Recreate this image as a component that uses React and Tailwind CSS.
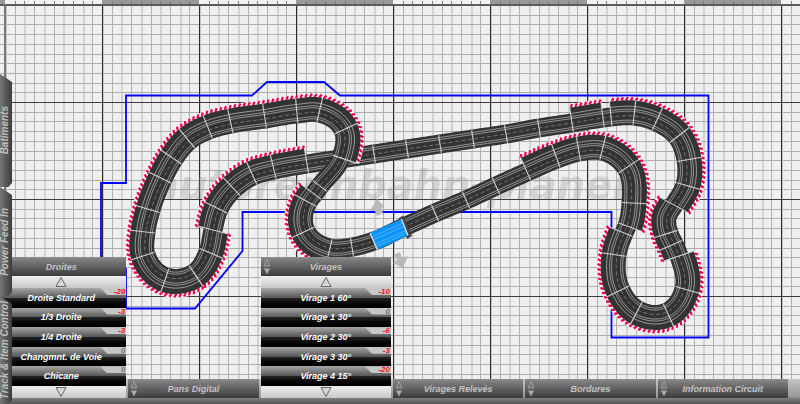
import { clsx } from "clsx";

// Each node: x, y, border side of the piece that follows (-1 left, 1 right), 1 = no joint drawn
const lowerRun = [
  [374, 241, 0],
  [404, 227, 0],
  [435, 213, 0],
  [466, 200, 0],
  [496, 186, 0],
  [527, 172, -1],
  [557, 159, -1],
  [579, 152, -1],
  [602, 151, -1],
  [626, 168, -1],
  [631, 203, -1],
  [627, 226, 0],
  [624, 233, 1],
  [617, 255, 1],
  [621, 290, 1],
  [638, 310, 1],
  [667, 312, 1],
  [684, 289, 1],
  [679, 256, -1],
  [674, 244, -1],
  [669, 233, -1],
  [667, 218, -1, 1],
  [674, 205, 1],
  [685, 185, 1],
  [686, 160, 1],
  [677, 137, 1],
  [656, 122, 1],
  [634, 116, 1],
  [611, 117, 0],
  [603, 118, 1],
  [572, 123, 0],
  [539, 128, 0],
  [506, 134, 0],
  [473, 139, 0],
  [440, 144, 0],
  [407, 149, 0],
  [374, 154, 0],
  [340, 159, 0],
  [307, 164, 1],
  [274, 170, 1],
  [253, 176, 1],
  [234, 189, 1],
  [219, 209, 1],
  [213, 230, -1],
  [208, 252, -1],
  [194, 273, -1],
  [166, 277, -1],
  [146, 255, 0],
];

const upperRun = [
  [194, 273, -1],
  [166, 277, -1],
  [146, 255, -1],
  [146, 232, -1],
  [151, 210, -1],
  [163, 179, -1],
  [174, 159, -1],
  [189, 141, -1],
  [209, 130, -1],
  [231, 124, -1],
  [265, 119, -1],
  [297, 114, -1],
  [319, 113, -1],
  [343, 130, -1],
  [341, 158, 0],
  [320, 186, 0],
  [314, 194, 1],
  [308, 202, 1],
  [306, 231, 1],
  [330, 248, 0],
  [352, 247, 0],
  [374, 241, 0],
];

// the ends of a run take their tangent from these neighbours
const lowerEnds = [[352, 247], [146, 232]];
const upperEnds = [[208, 252], [404, 227]];

const HALF = 9;
const BORDER = 7;
const STEPS = 12;

// direction at b of the circle through a, b and c
function tangentAt(a, b, c) {
  const v1 = [b[0] - a[0], b[1] - a[1]];
  const v2 = [c[0] - b[0], c[1] - b[1]];
  const l1 = Math.hypot(...v1);
  const l2 = Math.hypot(...v2);
  const t = [0, 1].map((k) => (v1[k] / l1) * l2 + (v2[k] / l2) * l1);
  const len = Math.hypot(...t);
  return [t[0] / len, t[1] / len];
}

function sampleSpan(p0, p1, p2, p3) {
  const t1 = tangentAt(p0, p1, p2);
  const t2 = tangentAt(p1, p2, p3);
  const chord = Math.hypot(p2[0] - p1[0], p2[1] - p1[1]);
  const turn = Math.acos(Math.min(1, t1[0] * t2[0] + t1[1] * t2[1]));
  const m = chord / Math.cos(turn / 4) ** 2;
  const out = [];
  for (let i = 0; i <= STEPS; i++) {
    const t = i / STEPS;
    const [x, y] = [0, 1].map(
      (k) =>
        (2 * t ** 3 - 3 * t ** 2 + 1) * p1[k] +
        (t ** 3 - 2 * t ** 2 + t) * m * t1[k] +
        (3 * t ** 2 - 2 * t ** 3) * p2[k] +
        (t ** 3 - t ** 2) * m * t2[k]
    );
    const [dx, dy] = [0, 1].map(
      (k) =>
        (6 * t ** 2 - 6 * t) * p1[k] +
        (3 * t ** 2 - 4 * t + 1) * m * t1[k] +
        (6 * t - 6 * t ** 2) * p2[k] +
        (3 * t ** 2 - 2 * t) * m * t2[k]
    );
    const len = Math.hypot(dx, dy);
    out.push({ x, y, nx: -dy / len, ny: dx / len });
  }
  return out;
}

function offsetPoint(s, offset) {
  return [s.x + s.nx * offset, s.y + s.ny * offset];
}

function offsetPath(samples, offset) {
  return samples
    .map((s, i) => {
      const [x, y] = offsetPoint(s, offset);
      return `${i ? "L" : "M"}${x.toFixed(2)} ${y.toFixed(2)}`;
    })
    .join("");
}

// slanted red ticks of a kerb, evenly spaced along its middle
function kerbPath(samples, side) {
  let d = "";
  let left = 1;
  for (let i = 1; i < samples.length; i++) {
    const a = offsetPoint(samples[i - 1], side * 17);
    const b = offsetPoint(samples[i], side * 17);
    const len = Math.hypot(b[0] - a[0], b[1] - a[1]);
    if (!len) continue;
    const ux = (b[0] - a[0]) / len;
    const uy = (b[1] - a[1]) / len;
    while (left <= len) {
      const x = a[0] + ux * left;
      const y = a[1] + uy * left;
      const ox = samples[i].nx * side * 1.6 - ux * side;
      const oy = samples[i].ny * side * 1.6 - uy * side;
      d += `M${(x - ox).toFixed(2)} ${(y - oy).toFixed(2)}L${(x + ox).toFixed(2)} ${(y + oy).toFixed(2)}`;
      left += 4.8;
    }
    left -= len;
  }
  return d;
}

function buildRun(nodes, ends) {
  const all = [ends[0], ...nodes, ends[1]];
  const spans = nodes.slice(0, -1).map((node, i) => ({
    side: node[2],
    samples: sampleSpan(all[i], all[i + 1], all[i + 2], all[i + 3]),
  }));
  const borders = [];
  spans.forEach((span, i) => {
    if (!span.side) return;
    if (i && spans[i - 1].side === span.side) {
      borders[borders.length - 1].samples.push(...span.samples.slice(1));
    } else {
      borders.push({ side: span.side, samples: [...span.samples] });
    }
  });
  const joints = spans
    .map((span, i) => {
      const sides = [span.side, i ? spans[i - 1].side : span.side];
      return {
        s: span.samples[0],
        from: sides.includes(-1) ? -HALF - BORDER : -HALF,
        to: sides.includes(1) ? HALF + BORDER : HALF,
        hidden: nodes[i][3],
      };
    })
    .filter((j) => !j.hidden);
  return { centre: spans.flatMap((s) => s.samples), borders, joints };
}

const runs = [buildRun(lowerRun, lowerEnds), buildRun(upperRun, upperEnds)];

function TrackRun({ run }) {
  return (
    <g fill="none">
      {run.borders.map((b, i) => (
        <g key={i}>
          <path d={offsetPath(b.samples, b.side * 17)} stroke="#ffffff" strokeWidth="4" />
          <path d={kerbPath(b.samples, b.side)} stroke="#f5004f" strokeWidth="2.4" />
          <path d={offsetPath(b.samples, b.side * 12)} stroke="#333333" strokeWidth="7" />
        </g>
      ))}
      <path d={offsetPath(run.centre, 0)} stroke="#333333" strokeWidth="19" />
      {[-6.5, -4.5, 4.5, 6.5].map((o) => (
        <path key={o} d={offsetPath(run.centre, o)} stroke="#a0a0a0" strokeWidth="0.9" />
      ))}
      <path d={offsetPath(run.centre, 0)} stroke="#858585" strokeWidth="0.8" strokeDasharray="4 2.5" />
      {run.borders.map((b, i) => (
        <path key={i} d={offsetPath(b.samples, b.side * 9.5)} stroke="#b8b8b8" strokeWidth="0.8" />
      ))}
      {run.joints.map(({ s, from, to }, i) => (
        <path
          key={i}
          d={`M${offsetPoint(s, from).join(" ")}L${offsetPoint(s, to).join(" ")}`}
          stroke="#d0d0d0"
          strokeWidth="1.1"
        />
      ))}
    </g>
  );
}

const gridLines = [1, 2, 3, 4, 5, 6, 7, 8, 9];

function TrackCanvas() {
  return (
    <svg className="absolute inset-0 h-full w-full" role="img" aria-label="Circuit">
      <defs>
        <pattern id="grid" x="5" y="5" width="97" height="97" patternUnits="userSpaceOnUse">
          <rect width="97" height="97" fill="#efefef" />
          {gridLines.map((n) => (
            <rect
              key={n}
              x={Math.round(n * 9.7)}
              width={n % 2 ? 1 : 2}
              height="97"
              fill={n % 2 ? "#b0b0b0" : "#d2d2d2"}
            />
          ))}
          {gridLines.map((n) => (
            <rect key={n} y={Math.round(n * 9.7)} width="97" height="1" fill="#adadad" />
          ))}
          <rect width="1" height="97" fill="#2c2c2c" />
          <rect x="1" width="1" height="97" fill="#c4c4c4" />
          <rect width="97" height="1" fill="#3c3c3c" />
        </pattern>
        <pattern id="ruler" x="102" y="0" width="194" height="5" patternUnits="userSpaceOnUse">
          <rect width="194" height="5" fill="#f2f2f2" />
          <rect width="97" height="5" fill="#999999" />
          {[...gridLines, 11, 12, 13, 14, 15, 16, 17, 18, 19].map((n) => (
            <rect key={n} x={Math.round(n * 9.7)} y="1" width="1" height="3" fill="#808080" />
          ))}
        </pattern>
      </defs>
      <rect width="100%" height="100%" fill="url(#grid)" />
      <rect width="100%" height="5" fill="url(#ruler)" />
      <rect y="4" width="100%" height="2" fill="#5c5c5c" />
      <rect x="4" y="4" width="2" height="100%" fill="#777777" />

      <text
        x="152"
        y="199"
        fill="#8c8c8c"
        fillOpacity="0.3"
        className="font-['DejaVu_Sans'] text-[40px] font-bold italic"
      >
        autorennbahn-planer
      </text>

      <path
        d="M101 269V183H126V95.5H252L267 82H324L340 95.5H708.5V337.5H611.5V212H242.5V251L195 308.500H126V269Z"
        fill="none"
        stroke="#0000fa"
        strokeWidth="1.8"
      />

      {runs.map((run, i) => (
        <TrackRun key={i} run={run} />
      ))}

      {/* start piece with its direction arrows */}
      <path d="M399 218L403 215.500L412 236L407 239Z" fill="#444444" />
      <path d="M370 233L401.500 219L408 235.500L377.500 250Z" fill="#0c94ff" />
      <path
        d="M371.500 237L403 223M373 240L404.500 226M375.500 244L406 230.500M376.500 246.500L407 233"
        stroke="#58b4f5"
        strokeWidth="0.9"
      />
      <path d="M370 233L377.500 250M401.500 219L408 235.500" stroke="#e5e5e5" strokeWidth="1.2" />
      <path d="M377 199L385 207L381 208L383 213L377 216L375 211L370 211Z" fill="#b8b8b8" />
      <path d="M394 255L400 252L402 258L408 256L403 268L393 263L397 260Z" fill="#b8b8b8" />
    </svg>
  );
}

const sideTabs = [
  { name: "Batiments", height: "h-[113px]" },
  { name: "Power Feed In", height: "h-[109px]" },
  { name: "Track & Item Control", height: "h-[108px]" },
];

const menus = [
  {
    name: "Droites",
    items: [
      { name: "Droite Standard", stock: -20 },
      { name: "1/3 Droite", stock: -3 },
      { name: "1/4 Droite", stock: -3 },
      { name: "Changmnt. de Voie", stock: 0 },
      { name: "Chicane", stock: 0 },
    ],
  },
  { name: "Pans Digital" },
  {
    name: "Virages",
    items: [
      { name: "Virage 1 60°", stock: -10 },
      { name: "Virage 1 30°", stock: 0 },
      { name: "Virage 2 30°", stock: -6 },
      { name: "Virage 3 30°", stock: -3 },
      { name: "Virage 4 15°", stock: -20 },
    ],
  },
  { name: "Virages Relevés" },
  { name: "Bordures" },
  { name: "Information Circuit" },
];

function ScrollButton({ label, up }) {
  return (
    <button
      type="button"
      aria-label={label}
      className="flex h-3 w-full items-center justify-center bg-linear-to-b from-[#efefef] to-[#c8c8c8]"
    >
      <svg width="12" height="10" viewBox="0 0 12 10" fill="#d8d8d8" stroke="#666666">
        <path d={up ? "M6 0.500L11 9.500H1Z" : "M6 9.500L11 0.500H1Z"} />
      </svg>
    </button>
  );
}

function MenuItem({ item }) {
  return (
    <button
      type="button"
      className="relative flex flex-1 items-center justify-center bg-linear-to-b from-[#a8a8a8] to-[#101010]"
    >
      <span className="absolute inset-x-0 bottom-0 h-1/2 bg-linear-to-b from-[#252525] to-black" />
      <span className="absolute top-0 right-0 h-[7px] w-[26px] bg-[#c6c6c6] [clip-path:polygon(0_0,100%_0,100%_100%,7px_100%)]" />
      <span
        className={clsx(
          "absolute top-0 right-px text-[8px] leading-2 font-bold italic",
          item.stock < 0 ? "text-[#f51010]" : "text-[#707070]"
        )}
      >
        {item.stock}
      </span>
      <span className="relative text-[9px] leading-3 font-bold text-white italic">{item.name}</span>
    </button>
  );
}

function Menu({ menu }) {
  return (
    <section className="min-w-0 flex-1">
      <button
        type="button"
        aria-expanded={Boolean(menu.items)}
        className="relative flex h-[19px] w-full items-center justify-center border-t border-[#8c8c8c] bg-linear-to-b from-[#858585] to-[#3c3c3c]"
      >
        <svg className="absolute top-px left-[2px]" width="8" height="16" viewBox="0 0 8 16">
          <path d="M4 0.500L7 7H1Z" fill="#777777" stroke="#a8a8a8" strokeWidth="0.8" />
          <path d="M4 15.500L7 9.500H1Z" fill="#aaaaaa" />
        </svg>
        <span className="text-[9px] leading-3 font-bold text-[#c4c4c4] italic">{menu.name}</span>
      </button>
      {menu.items && (
        <>
          <ScrollButton label={`${menu.name} : monter`} up />
          <div className="flex h-[98px] flex-col">
            {menu.items.map((item) => (
              <MenuItem key={item.name} item={item} />
            ))}
          </div>
          <ScrollButton label={`${menu.name} : descendre`} />
        </>
      )}
    </section>
  );
}

export default function App() {
  return (
    <main className="relative h-screen overflow-hidden bg-[#efefef] font-['Liberation_Sans',sans-serif]">
      <TrackCanvas />

      {/* Bottom menus */}
      <nav className="absolute inset-x-0 bottom-0 flex items-end bg-[linear-gradient(to_bottom,#c4c4c4,#999_70%,#777_80%,#555)] bg-[length:100%_25px] bg-bottom bg-no-repeat pr-3 pb-[6px]">
        <div className="-ml-1 flex min-w-0 flex-1 items-end gap-[2px]">
          {menus.map((menu) => (
            <Menu key={menu.name} menu={menu} />
          ))}
        </div>
      </nav>

      {/* Side tabs */}
      <aside className="absolute bottom-0 left-0 flex w-3 flex-col">
        {sideTabs.map((tab) => (
          <button
            key={tab.name}
            type="button"
            className={clsx(
              "flex items-center bg-linear-to-r from-[#777] to-[#3c3c3c] [clip-path:polygon(0_0,100%_8px,100%_calc(100%-4px),70%_100%,0_100%)]",
              tab.height
            )}
          >
            <span className="rotate-180 text-[10px] leading-[10px] font-bold whitespace-nowrap text-[#c0c0c0] italic [writing-mode:vertical-rl]">
              {tab.name}
            </span>
          </button>
        ))}
      </aside>
    </main>
  );
}
